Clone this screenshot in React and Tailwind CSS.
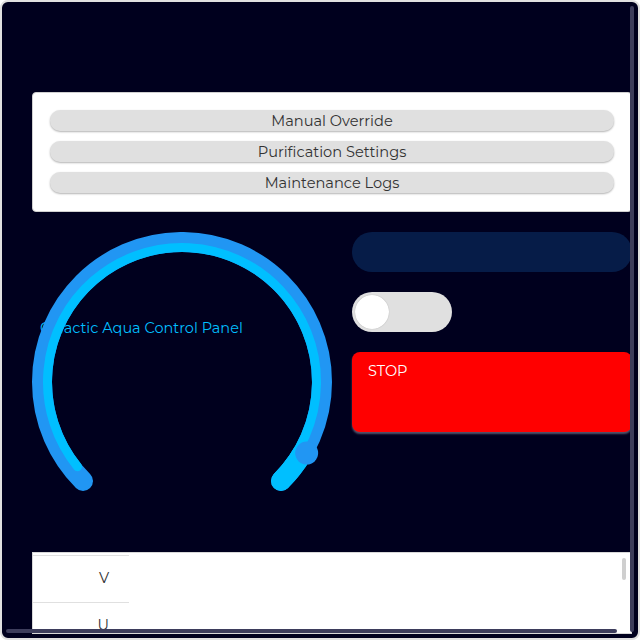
import React, { useState } from 'react';

const font = { fontFamily: "Montserrat, 'Noto Sans', 'Open Sans', sans-serif" };

const menuItems = ['Manual Override', 'Purification Settings', 'Maintenance Logs'];
const rows = ['V', 'U', 'T', 'S', 'R', 'Q'];

// point on a circle, svg coords (y down)
const pt = (r, deg) => {
  const a = (deg * Math.PI) / 180;
  return [150 + r * Math.cos(a), 150 + r * Math.sin(a)];
};

const arc = (r, from, to) => {
  const [x1, y1] = pt(r, from);
  const [x2, y2] = pt(r, to);
  const large = to - from > 180 ? 1 : 0;
  return `M${x1.toFixed(2)} ${y1.toFixed(2)} A${r} ${r} 0 ${large} 1 ${x2.toFixed(2)} ${y2.toFixed(2)}`;
};

const Gauge = () => {
  const [kx, ky] = pt(143.5, 29.7);
  return (
    <div className="relative w-[300px] h-[300px] shrink-0">
      <span className="absolute left-[8px] top-[86px] text-[14.5px] leading-5 text-[#00bfff] whitespace-nowrap">
        Galactic Aqua Control Panel
      </span>
      <svg className="absolute inset-0" width="300" height="300" viewBox="0 0 300 300">
        <path d={arc(140, 135, 405)} fill="none" stroke="#2196f3" strokeWidth="20" strokeLinecap="round" />
        <path d={arc(134.5, 141, 405)} fill="none" stroke="#00bfff" strokeWidth="9" strokeLinecap="round" />
        <path d={arc(140, 31, 45)} fill="none" stroke="#00bfff" strokeWidth="20" strokeLinecap="round" />
        <circle cx={kx} cy={ky} r="11.5" fill="#2196f3" />
      </svg>
    </div>
  );
};

export default function App() {
  const [on, setOn] = useState(false);

  return (
    <div
      style={font}
      className="relative w-[640px] h-[640px] border-2 border-[#e0e0e0] rounded-lg bg-[#00001e] overflow-hidden"
    >
      <div className="w-[645px] pl-[30px] pr-[15px] pt-[90px]">
        {/* menu */}
        <div className="w-[600px] bg-white border border-[#d0d0d0] rounded-[4px] px-[17px] pt-[17px] pb-[18px] flex flex-col gap-[10px]">
          {menuItems.map((m) => (
            <button
              key={m}
              className="h-[21px] w-full rounded-[10px] bg-[#e0e0e0] text-[14.6px] leading-5 text-[#333] shadow-[0_1px_2px_rgba(0,0,0,0.3)]"
            >
              {m}
            </button>
          ))}
        </div>

        <div className="mt-5 flex gap-5 w-[600px]">
          <Gauge />
          <div className="flex-1 flex flex-col gap-5">
            <div className="h-10 rounded-full bg-[#061c48]" />
            <button
              onClick={() => setOn(!on)}
              className="w-[100px] h-10 rounded-full bg-[#e0e0e0] flex items-center px-[3px]"
            >
              <span className="w-[34px] h-[34px] rounded-full bg-white shadow-[0_0_1px_rgba(0,0,0,0.3)]" />
            </button>
            <button className="h-20 rounded-lg bg-[#ff0000] text-white text-[14.5px] leading-5 text-left px-4 pt-[9px] flex items-start shadow-[0_2px_2px_rgba(120,120,140,0.7)]">
              STOP
            </button>
          </div>
        </div>

        {/* readings */}
        <div className="relative mt-5 w-[600px] h-[82px] bg-white border border-[#d8d8d8] overflow-hidden pt-[2px]">
          {rows.map((r) => (
            <div key={r} className="flex">
              <div className="w-[96px] h-[47px] border-t border-[#e0e0e0] flex items-center justify-end pr-5 text-[14.5px] text-[#333]">
                {r}
              </div>
            </div>
          ))}
          <div className="absolute right-[5px] top-[5px] w-[4px] h-[22px] rounded-full bg-[#cfcfcf]" />
        </div>
      </div>

      {/* page scrollbars */}
      <div className="absolute left-[628px] top-[4px] w-[4px] h-[626px] rounded-full bg-[#3d3d5c]" />
      <div className="absolute left-[4px] top-[627px] w-[611px] h-[4px] rounded-full bg-[#3d3d5c]" />
    </div>
  );
}
